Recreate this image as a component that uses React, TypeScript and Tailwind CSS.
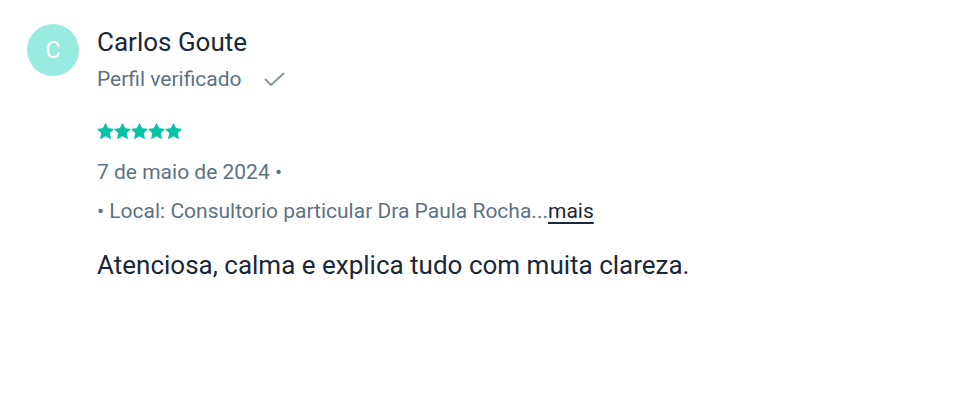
import React from "react";

function Star() {
  return (
    <svg width="17" height="17" viewBox="0 0 24 24" className="block">
      <path
        d="M12 1l3.3 7 7.7 0.9-5.7 5.2 1.6 7.7L12 18l-6.9 3.8 1.6-7.7L1 8.9l7.7-0.9z"
        fill="#00c3a5"
        stroke="#00c3a5"
        strokeWidth="1.4"
        strokeLinejoin="round"
      />
    </svg>
  );
}

export default function App() {
  return (
    <div className="w-[978px] h-[407px] bg-white" style={{ fontFamily: "Roboto, sans-serif" }}>
      <div className="flex items-start gap-[18px] pl-[27px] pt-[24px]">
        <div className="w-[52px] h-[52px] rounded-full bg-[#99ebe1] flex items-center justify-center shrink-0">
          <span className="text-white text-[23px] leading-none">C</span>
        </div>
        <div className="flex flex-col">
          <div className="text-[26px] leading-[32px] text-[#1a2838] mt-[2px]">Carlos Goute</div>
          <div className="flex items-center text-[21px] leading-[28px] text-[#5d7284] mt-[7px]">
            <span>Perfil verificado</span>
            <svg width="21" height="14" viewBox="0 0 21 14" className="ml-[22px]" fill="none">
              <path d="M1 7l6 6L20 1" stroke="#8896a3" strokeWidth="2" />
            </svg>
          </div>
          <div className="flex mt-[30px]">
            <Star />
            <Star />
            <Star />
            <Star />
            <Star />
          </div>
          <div className="text-[21px] leading-[28px] text-[#5d7284] mt-[18px]">7 de maio de 2024 •</div>
          <div className="text-[21px] leading-[28px] text-[#5d7284] mt-[11px]">
            • Local: Consultorio particular Dra Paula Rocha...
            <span className="text-[#1a2838] underline underline-offset-[4px]">mais</span>
          </div>
          <div className="text-[26px] leading-[32px] text-[#1a2838] mt-[24px]">
            Atenciosa, calma e explica tudo com muita clareza.
          </div>
        </div>
      </div>
    </div>
  );
}
